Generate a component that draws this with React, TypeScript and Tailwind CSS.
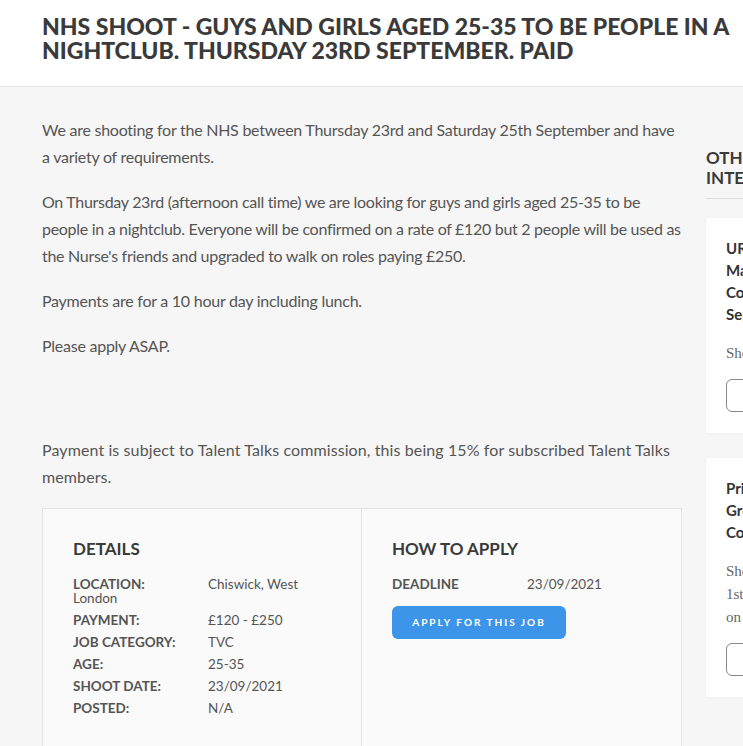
import React from 'react';

const sideJobs = [
  {
    title: ['URGENT: Female Model', 'Male Model for', 'Commercial Shoot', 'September'],
    text: ['Shoot on 2nd October'],
  },
  {
    title: ['Primark - Friends', 'Group for', 'Commercial'],
    text: ['Shoot date is the', '1st October, paid', 'on the day'],
  },
];

const details = [
  { label: 'Location:', value: 'Chiswick, West London' },
  { label: 'Payment:', value: '£120 - £250' },
  { label: 'Job Category:', value: 'TVC' },
  { label: 'Age:', value: '25-35' },
  { label: 'Shoot Date:', value: '23/09/2021' },
  { label: 'Posted:', value: 'N/A' },
];

const App: React.FC = () => {
  return (
    <div className="min-h-screen w-full overflow-x-hidden bg-[#f6f6f6] font-['Lato',sans-serif]">
      {/* Title bar */}
      <header className="h-[87px] border-b border-[#e6e6e6] bg-white px-[42px] pt-[14px]">
        <h1 className="w-[700px] text-[23px] font-black uppercase leading-[24px] text-[#3a3a3a]">
          NHS Shoot - Guys and girls aged 25-35 to be people in a nightclub. Thursday 23rd September. Paid
        </h1>
      </header>

      <div className="flex w-[1100px] gap-[24px] pl-[42px] pt-[29px]">
        {/* Main column */}
        <main className="w-[640px] shrink-0">
          <div className="text-[16px] leading-[27px] text-[#555]">
            <div className="tracking-[-0.25px]">
              <p className="mb-[18px]">
                We are shooting for the NHS between Thursday 23rd and Saturday 25th September and have a variety of requirements.
              </p>
              <p className="mb-[18px] tracking-[-0.3px]">
                On Thursday 23rd (afternoon call time) we are looking for guys and girls aged 25-35 to be people in a nightclub. Everyone will be confirmed on a rate of £120 but 2 people will be used as the Nurse's friends and upgraded to walk on roles paying £250.
              </p>
              <p className="mb-[18px]">Payments are for a 10 hour day including lunch.</p>
              <p className="mb-[77px]">Please apply ASAP.</p>
            </div>
            <p className="mb-[18px] tracking-[0.1px]">
              Payment is subject to Talent Talks commission, this being 15% for subscribed Talent Talks members.
            </p>
          </div>

          {/* Details box */}
          <div className="grid grid-cols-2 border border-[#e4e4e4] bg-[#fafafa]">
            <section className="border-r border-[#e4e4e4] px-[30px] pb-[40px] pt-[28px]">
              <h2 className="mb-[16px] text-[17px] font-bold uppercase leading-[24px] text-[#3a3a3a]">Details</h2>
              <div className="flex flex-col gap-[8px] text-[13.5px] leading-[14px] text-[#555]">
                {details.map((d) => (
                  <div key={d.label}>
                    <span className="inline-block w-[135px] font-bold uppercase text-[#555]">{d.label}</span>
                    {d.value}
                  </div>
                ))}
              </div>
            </section>
            <section className="px-[30px] pt-[28px]">
              <h2 className="mb-[16px] text-[17px] font-bold uppercase leading-[24px] text-[#3a3a3a]">How to apply</h2>
              <div className="text-[13.5px] leading-[14px] text-[#555]">
                <span className="inline-block w-[135px] font-bold uppercase">Deadline</span>
                23/09/2021
              </div>
              <button className="mt-[15px] flex h-[33px] w-[174px] items-center justify-center rounded-[6px] bg-[#3d95e9] text-[10px] font-bold uppercase tracking-[2px] text-white">
                Apply for this job
              </button>
            </section>
          </div>
        </main>

        {/* Sidebar */}
        <aside className="w-[262px] shrink-0 pt-[32px]">
          <h3 className="border-b border-[#dedede] pb-[10px] text-[17px] font-bold uppercase leading-[20px] text-[#3a3a3a]">
            Other jobs you may be interested in
          </h3>
          <div className="mt-[19px] flex flex-col gap-[25px]">
            {sideJobs.map((job, i) => (
              <div key={i} className="bg-white px-[20px] pb-[21px] pt-[19px] shadow-[0_0_2px_rgba(0,0,0,0.06)]">
                <h4 className="text-[15px] font-bold leading-[22px] text-[#333]">
                  {job.title.map((t, j) => (
                    <span key={j} className="block">
                      {t}
                    </span>
                  ))}
                </h4>
                <p className="mt-[17px] font-['Liberation_Serif',serif] text-[15px] leading-[23px] text-[#666]">
                  {job.text.map((t, j) => (
                    <span key={j} className="block">
                      {t}
                    </span>
                  ))}
                </p>
                <button className="mt-[14px] h-[33px] w-[140px] rounded-[6px] border border-[#888] text-[10px] font-bold uppercase tracking-[2px] text-[#555]">
                  View job
                </button>
              </div>
            ))}
          </div>
        </aside>
      </div>
    </div>
  );
};

export default App;
